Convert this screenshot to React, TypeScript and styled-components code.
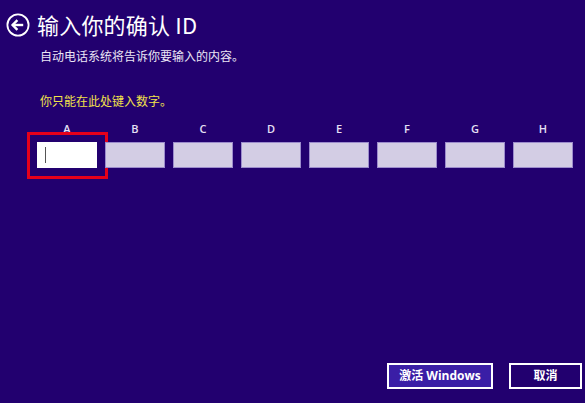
import styled, { createGlobalStyle } from "styled-components"

const GlobalStyle = createGlobalStyle`
  html, body {
    margin: 0;
    padding: 0;
    background: #22006f;
  }
  body {
    font-family: "Noto Sans CJK SC", "Noto Sans", sans-serif;
  }
`

const columns = ["A", "B", "C", "D", "E", "F", "G", "H"]

const BackIcon = () => (
  <svg width="24" height="24" viewBox="0 0 24 24" fill="none">
    <circle cx="12" cy="12" r="10.6" stroke="#fff" strokeWidth="1.8" />
    <path d="M6.6 12h10.6" stroke="#fff" strokeWidth="2.4" />
    <path d="M11.4 7.2L6.6 12l4.8 4.8" stroke="#fff" strokeWidth="2.4" strokeLinejoin="miter" />
  </svg>
)

export default function App() {
  return (
    <>
      <GlobalStyle />
      <Page>
        <Header>
          <BackIcon />
          <Title>输入你的确认 ID</Title>
        </Header>
        <Body>
          <Subtitle>自动电话系统将告诉你要输入的内容。</Subtitle>
          <Notice>你只能在此处键入数字。</Notice>
          <Fields>
            {columns.map((c, i) => (
              <Field key={c}>
                <Label>{c}</Label>
                <Cell $active={i === 0}>
                  {i === 0 && <Caret />}
                  {i === 0 && <FocusFrame />}
                </Cell>
              </Field>
            ))}
          </Fields>
        </Body>
        <Footer>
          <Button $primary>激活 Windows</Button>
          <Button>取消</Button>
        </Footer>
      </Page>
    </>
  )
}

const Page = styled.div`
  width: 585px;
  height: 403px;
  box-sizing: border-box;
  padding: 12px 3px 14px 6px;
  display: flex;
  flex-direction: column;
  background: #22006f;
  color: #fff;
  overflow: hidden;
`
const Header = styled.div`
  display: flex;
  align-items: center;
  gap: 7px;
  height: 25px;
`
const Title = styled.h1`
  margin: 0;
  font-size: 22px;
  font-weight: 400;
  line-height: 25px;
  letter-spacing: 0.2px;
`
const Body = styled.div`
  display: flex;
  flex-direction: column;
  padding-left: 31px;
`
const Subtitle = styled.p`
  margin: 11px 0 0 3px;
  font-size: 12px;
  line-height: 16px;
  color: #ebe6f5;
`
const Notice = styled.p`
  margin: 29px 0 0 3px;
  font-size: 12px;
  line-height: 16px;
  color: #f2e24a;
`
const Fields = styled.div`
  display: grid;
  grid-template-columns: repeat(8, 60px);
  column-gap: 8px;
  margin-top: 13px;
`
const Field = styled.div`
  display: flex;
  flex-direction: column;
  align-items: center;
  gap: 6px;
`
const Label = styled.span`
  font-family: "Open Sans", "Noto Sans", sans-serif;
  font-size: 11px;
  font-weight: 600;
  line-height: 14px;
  color: #e6e0f5;
`
const Cell = styled.div<{ $active?: boolean }>`
  position: relative;
  width: 60px;
  height: 26px;
  box-sizing: border-box;
  border: 1px solid ${p => (p.$active ? "#ffffff" : "#9c8ccc")};
  background: ${p => (p.$active ? "#ffffff" : "#d3cde4")};
`
const Caret = styled.span`
  position: absolute;
  left: 7px;
  top: 4px;
  width: 1px;
  height: 16px;
  background: #555;
`
const FocusFrame = styled.span`
  position: absolute;
  left: -11px;
  top: -11px;
  right: -12px;
  bottom: -12px;
  border: 3px solid #e5001a;
  pointer-events: none;
`
const Footer = styled.div`
  margin-top: auto;
  display: flex;
  justify-content: flex-end;
  gap: 16px;
`
const Button = styled.button<{ $primary?: boolean }>`
  height: 26px;
  min-width: ${p => (p.$primary ? "106px" : "73px")};
  padding: 0 10px;
  box-sizing: border-box;
  border: 2px solid #ffffff;
  background: ${p => (p.$primary ? "#3a1ea6" : "#22006f")};
  color: #fff;
  font-family: "Open Sans", "Noto Sans CJK SC", sans-serif;
  font-size: 12px;
  font-weight: 700;
  line-height: 20px;
`
